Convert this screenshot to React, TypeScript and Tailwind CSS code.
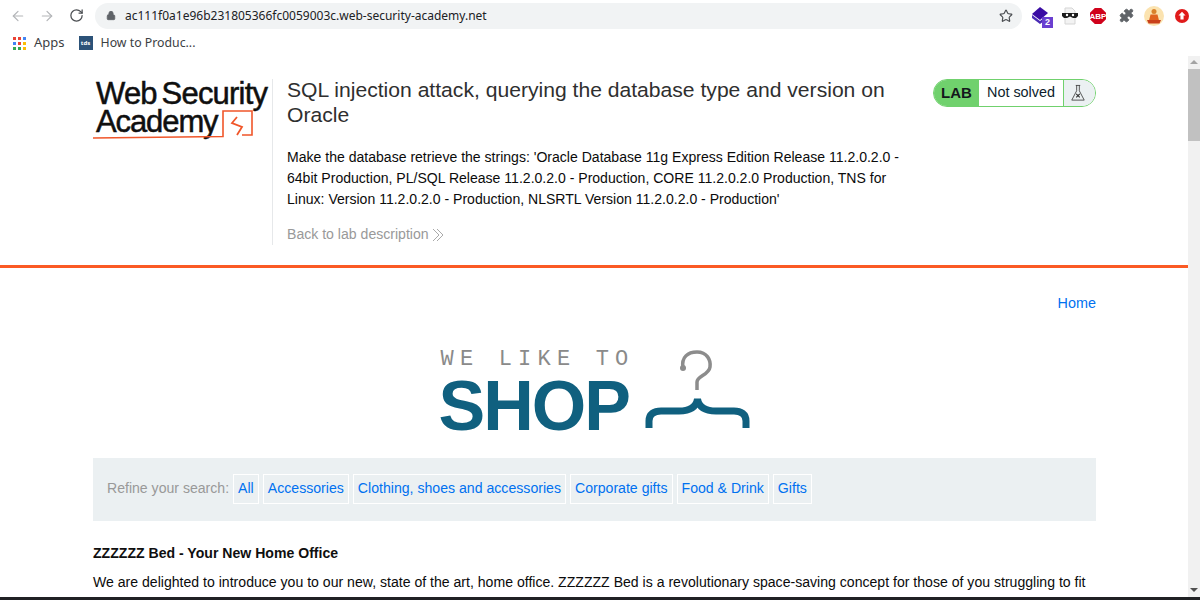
import React from 'react';
import { ArrowLeft, ArrowRight, RotateCw, Lock, Star, Puzzle } from 'lucide-react';

const categories = ['All', 'Accessories', 'Clothing, shoes and accessories', 'Corporate gifts', 'Food & Drink', 'Gifts'];

const AppsIcon = () => {
  const colors = ['#ea4335', '#ea4335', '#4285f4', '#4285f4', '#ea4335', '#fbbc04', '#34a853', '#34a853', '#fbbc04'];
  return (
    <div className="grid grid-cols-3 gap-[2px] w-[13px] h-[13px]">
      {colors.map((c, i) => (
        <span key={i} className="w-[3px] h-[3px]" style={{ backgroundColor: c }} />
      ))}
    </div>
  );
};

const ExtSlot = ({ children }: { children: React.ReactNode }) => (
  <div className="w-[28px] h-[26px] flex items-center justify-center">{children}</div>
);

const Extensions = () => (
  <div className="flex items-center ml-[6px] shrink-0">
    <ExtSlot>
      {/* stacked cube extension */}
      <div className="relative w-[20px] h-[20px] mt-[2px]">
        <svg viewBox="0 0 20 20" className="w-[20px] h-[20px]">
          <path d="M8 0l8 6-8 7-8-6z" fill="#3a0ca3" />
          <path d="M0 8l8 6 4-3v3l-4 3-8-6z" fill="#4a2bb5" />
        </svg>
        <span className="absolute -right-px -bottom-px w-[11px] h-[11px] bg-[#6a3fd0] text-white text-[9px] leading-[11px] text-center font-bold">2</span>
      </div>
    </ExtSlot>
    <ExtSlot>
      {/* masked page */}
      <svg viewBox="0 0 16 18" className="w-[16px] h-[18px]">
        <path d="M3 1h7l3 3v13H3z" fill="#f3f3f3" stroke="#d5d5d5" />
        <path d="M0 6h16v3l-2 2h-3l-3-1.500L5 11H2L0 9z" fill="#1c1c1c" />
        <circle cx="5" cy="8" r="1.200" fill="#fff" />
        <circle cx="11" cy="8" r="1.200" fill="#fff" />
      </svg>
    </ExtSlot>
    <ExtSlot>
      {/* adblock */}
      <svg viewBox="0 0 20 20" className="w-[16px] h-[16px]">
        <path d="M6 0h8l6 6v8l-6 6H6l-6-6V6z" fill="#d0021b" />
        <text x="10" y="13.500" textAnchor="middle" fontSize="10" fontWeight="700" fill="#fff" fontFamily="Liberation Sans">ABP</text>
      </svg>
    </ExtSlot>
    <ExtSlot>
      <Puzzle className="w-[15px] h-[15px] text-[#5f6368] fill-[#5f6368]" strokeWidth={1.500} />
    </ExtSlot>
    <ExtSlot>
      {/* avatar */}
      <svg viewBox="0 0 20 20" className="w-[20px] h-[20px]">
        <circle cx="10" cy="10" r="10" fill="#fbe3b0" />
        <circle cx="10" cy="5.500" r="2.500" fill="#d9822b" />
        <path d="M6.500 8.500h7l1.500 6H5z" fill="#e0641f" />
        <path d="M3 14h14l-1.500 3.500h-11z" fill="#c9401a" />
      </svg>
    </ExtSlot>
    <ExtSlot>
      {/* red circle up */}
      <svg viewBox="0 0 16 16" className="w-[14px] h-[14px]">
        <circle cx="8" cy="8" r="8" fill="#e01b1b" />
        <path d="M8 3l4 4.500H9.800V12H6.200V7.500H4z" fill="#fff" />
      </svg>
    </ExtSlot>
  </div>
);

const AcademyLogo = () => (
  <div className="relative w-[176px] h-[66px] text-[#0f0f0f] whitespace-nowrap pl-[2px] pt-[1px] [-webkit-text-stroke:0.5px_#0f0f0f]">
    <div className="text-[31px] leading-[28px] tracking-[-0.800px] [word-spacing:-3px]">Web Security</div>
    <div className="text-[31px] leading-[28px] tracking-[-1.100px]">Academy</div>
    <svg viewBox="0 0 176 66" className="absolute left-0 top-0 w-[176px] h-[66px] overflow-visible" fill="none">
      <path d="M-1 59 L129 57.500 V32 H158 V56 H148" stroke="#f0562a" strokeWidth="1.600" />
      <path d="M143 38 L138 44 L148 48 L143 56" stroke="#f0562a" strokeWidth="1.800" />
    </svg>
  </div>
);

const LabBadge = () => (
  <div className="flex items-stretch h-[28px] w-[163px] rounded-full border border-[#70d16d] overflow-hidden">
    <div className="w-[45px] bg-[#70d16d] text-[#14181c] font-bold text-[15px] flex items-center justify-center">LAB</div>
    <div className="flex-1 text-[#0d1c2b] text-[14.400px] flex items-center justify-center">Not solved</div>
    <div className="w-[32px] bg-[#ebf0f2] border-l border-[#70d16d] flex items-center pl-[6px]">
      <svg viewBox="0 0 18 20" className="w-[16px] h-[20px]" fill="none" stroke="#333" strokeWidth="0.900">
        <path d="M6.500 1.500h5M7.500 1.500v6L2 18h14L10.500 7.500v-6" />
        <path d="M7 11l4 4M11 11l-4 4" strokeWidth="1.300" />
      </svg>
    </div>
  </div>
);

const ShopLogo = () => (
  <div className="relative w-[310px] h-[90px]">
    <div className="font-['Liberation_Mono',monospace] text-[22px] leading-[22px] text-[#8a8a8a] tracking-[6.200px] whitespace-pre pt-[4px]">WE LIKE TO</div>
    <div className="font-bold text-[70px] leading-[66px] text-[#10607f] tracking-[-2px] -ml-[2px] mt-[2px]">SHOP</div>
    <svg viewBox="0 0 110 90" className="absolute left-[200px] top-0 w-[110px] h-[90px]" fill="none">
      <path d="M42 23 C40 12 47 7 56 7 C66 7 70 15 69 22 C68 30 56 31 56 37 V45" stroke="#8c8c8c" strokeWidth="3.500" />
      <circle cx="42" cy="23" r="3" fill="#8c8c8c" />
      <path d="M8 83 V76 C8 69 13 66 20 66 H38 C48 66 55 63 56.500 54 C58 63 65 66 75 66 H93 C100 66 105 69 105 76 V83" stroke="#10607f" strokeWidth="7" />
    </svg>
  </div>
);

export default function App() {
  return (
    <div className="flex flex-col h-[600px] overflow-hidden bg-white font-['Liberation_Sans',sans-serif]">
      {/* browser chrome */}
      <div className="flex items-center h-[30px] shrink-0 pl-[10px] pt-[1px]">
        <ArrowLeft className="w-[16px] h-[16px] text-[#b3b5b8]" strokeWidth={1.800} />
        <ArrowRight className="w-[16px] h-[16px] ml-[13px] text-[#b3b5b8]" strokeWidth={1.800} />
        <RotateCw className="w-[15px] h-[15px] ml-[14px] text-[#4b4e52]" strokeWidth={2} />
        <div className="flex items-center ml-[11px] w-[927px] shrink-0 h-[26px] rounded-full bg-[#f1f3f4] pl-[11px] pr-[9px]">
          <Lock className="w-[10px] h-[11px] text-[#5f6368] fill-[#5f6368]" />
          <span className="ml-[9px] text-[12px] text-[#202124] font-['Noto_Sans',sans-serif] flex-1 whitespace-nowrap">ac111f0a1e96b231805366fc0059003c.web-security-academy.net</span>
          <Star className="w-[14px] h-[14px] text-[#4b4e52]" strokeWidth={2} />
        </div>
        <Extensions />
      </div>
      <div className="flex items-center h-[26px] shrink-0 pl-[13px] text-[13px] text-[#3c4043] font-['Noto_Sans',sans-serif]">
        <AppsIcon />
        <span className="ml-[8px]">Apps</span>
        <span className="ml-[14px] w-[14px] h-[14px] bg-[#2c5278] text-white text-[6px] leading-[14px] text-center font-bold">tds</span>
        <span className="ml-[8px] text-[12.300px]">How to Produc...</span>
      </div>

      <div className="flex flex-1 min-h-0">
        <main className="flex-1 min-w-0 overflow-hidden">
          {/* lab banner */}
          <header className="h-[212px] border-b-[3px] border-[#fb5a24] flex pl-[94px] pr-[92px] pt-[23px]">
            <div className="w-[178px] shrink-0">
              <AcademyLogo />
            </div>
            <div className="h-[166px] border-l border-[#e6e8ea] pl-[14px] flex-1 flex justify-between">
              <div className="w-[620px]">
                <h2 className="text-[21.120px] leading-[25px] text-[#2f2f2f] -mt-[2px]">SQL injection attack, querying the database type and version on Oracle</h2>
                <p className="mt-[20px] text-[14.060px] leading-[21px] text-[#0b0b0b]">Make the database retrieve the strings: 'Oracle Database 11g Express Edition Release 11.2.0.2.0 - 64bit Production, PL/SQL Release 11.2.0.2.0 - Production, CORE 11.2.0.2.0 Production, TNS for Linux: Version 11.2.0.2.0 - Production, NLSRTL Version 11.2.0.2.0 - Production'</p>
                <div className="mt-[14px] flex items-center text-[14.080px] text-[#999]">
                  Back to lab description
                  <svg viewBox="0 0 12 14" className="w-[12px] h-[14px] ml-[3px]" fill="none" stroke="#aaa" strokeWidth="1">
                    <path d="M1 1l6 6-6 6M5 1l6 6-6 6" />
                  </svg>
                </div>
              </div>
              <div>
                <LabBadge />
              </div>
            </div>
          </header>

          {/* shop page */}
          <div className="pl-[93px] pr-[92px]">
            <div className="flex justify-end pt-[27px] text-[14.400px] leading-[17px] text-[#0071f0]">Home</div>
            <div className="flex justify-center mt-[33px] pl-[2px]">
              <ShopLogo />
            </div>
            <section className="mt-[23px] h-[63px] bg-[#ebf0f2] flex items-center pl-[14px] pb-[1px] text-[14.080px]">
              <span className="text-[#999] mr-[4px]">Refine your search:</span>
              <div className="flex gap-[4px] text-[14.120px]">
                {categories.map((c) => (
                  <a key={c} className="h-[30px] px-[4px] flex items-center border border-white text-[#0071f0] whitespace-nowrap">{c}</a>
                ))}
              </div>
            </section>
            <h4 className="mt-[24px] font-bold text-[14.080px] leading-[17px] text-[#0f0f0f]">ZZZZZZ Bed - Your New Home Office</h4>
            <p className="mt-[10px] text-[14.080px] leading-[20px] text-[#0b0b0b] whitespace-nowrap">We are delighted to introduce you to our new, state of the art, home office. ZZZZZZ Bed is a revolutionary space-saving concept for those of you struggling to fit</p>
          </div>
        </main>
        {/* scrollbar */}
        <div className="w-[12px] shrink-0 bg-[#f1f1f1] relative flex flex-col">
          <div className="h-[12px] flex items-center justify-center">
            <span className="border-x-[4px] border-x-transparent border-b-[4px] border-b-[#a3a3a3]" />
          </div>
          <div className="h-[72px] mt-[1px] bg-[#c1c1c1]" />
          <div className="mt-auto h-[14px] flex items-center justify-center">
            <span className="border-x-[4px] border-x-transparent border-t-[4px] border-t-[#505050]" />
          </div>
        </div>
      </div>
      <div className="h-[3px] shrink-0 bg-[#202124]" />
    </div>
  );
}
